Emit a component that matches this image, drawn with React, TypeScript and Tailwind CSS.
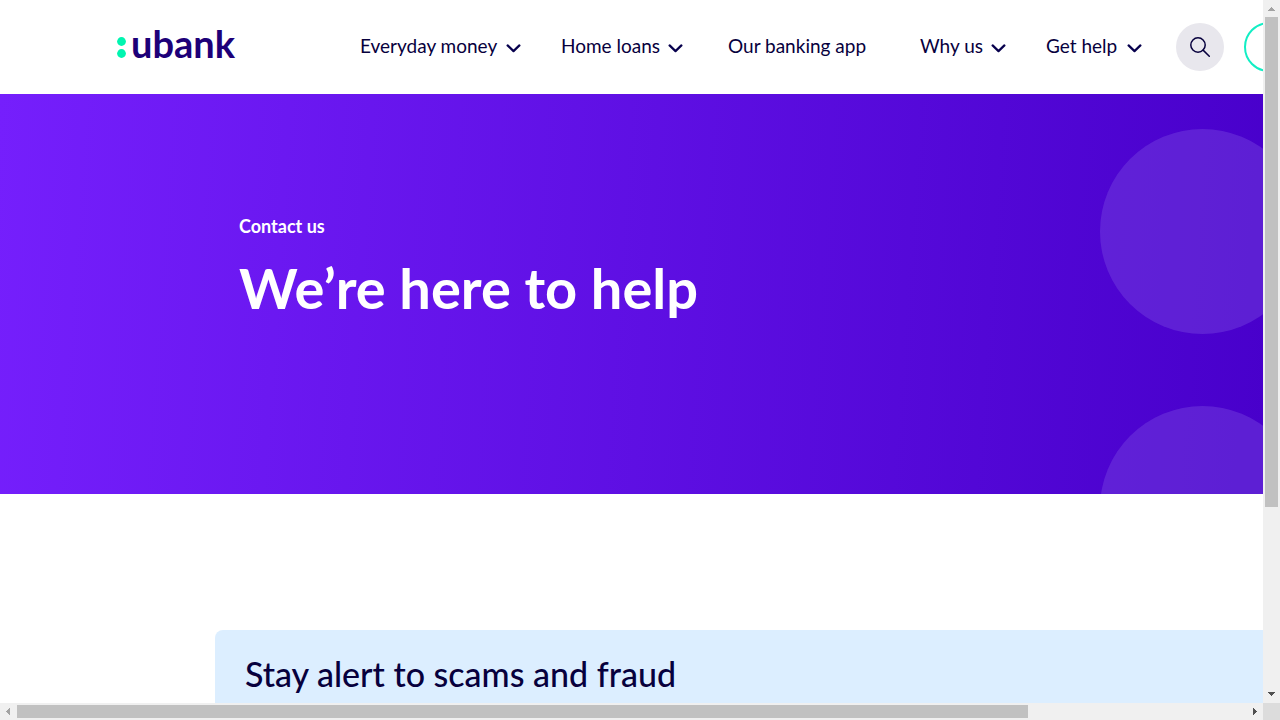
import type { ReactNode } from "react";

function Chevron() {
  return (
    <svg width="15" height="9" viewBox="0 0 15 9" fill="none" aria-hidden="true" className="mt-1 shrink-0">
      <path d="M1.6 1.4 7.5 7.1l5.9-5.7" stroke="#07004d" strokeWidth="2.2" strokeLinecap="round" strokeLinejoin="round" />
    </svg>
  );
}

function MenuButton({ width, children }: { width: string; children: ReactNode }) {
  return (
    <button type="button" className={`flex shrink-0 items-center justify-between whitespace-nowrap ${width}`}>
      {children}
      <Chevron />
    </button>
  );
}

function Logo() {
  return (
    <a href="#home" aria-label="ubank" className="flex w-[243px] shrink-0 items-center gap-1 pb-2 text-[#1d0078]">
      <svg width="10" height="30" viewBox="0 0 10 30" aria-hidden="true">
        <circle cx="4.5" cy="13.5" r="4.4" fill="#00f5b0" />
        <circle cx="4.5" cy="25.5" r="4.4" fill="#00f5b0" />
      </svg>
      <span className="text-[38px] leading-[30px] font-bold">ubank</span>
    </a>
  );
}

function Header() {
  return (
    <header className="flex h-[94px] items-center pl-[117px] text-[19px] leading-7 text-[#07003d]">
      <Logo />
      <nav aria-label="Main" className="flex shrink-0 items-center gap-10 pb-0.5">
        <MenuButton width="w-[161px]">Everyday money</MenuButton>
        <MenuButton width="w-[122px]">Home loans</MenuButton>
        <a href="#app" className="w-[157px] whitespace-nowrap pl-[5px]">Our banking app</a>
        <MenuButton width="w-[86px]">Why us</MenuButton>
        <MenuButton width="w-[96px]">Get help</MenuButton>
      </nav>
      <button type="button" aria-label="Search" className="ml-[34px] flex size-12 shrink-0 items-center justify-center rounded-full bg-[#e8e7ed]">
        <svg width="20" height="20" viewBox="0 0 20 20" fill="none" stroke="#07003d" strokeWidth="1.5" aria-hidden="true">
          <circle cx="8" cy="8" r="7.2" />
          <path d="m13.1 13.1 6.2 6.2" strokeLinecap="round" />
        </svg>
      </button>
      <button type="button" aria-label="Log in" className="ml-5 h-[50px] w-[120px] shrink-0 rounded-full border-2 border-[#12eec4]" />
    </header>
  );
}

function Hero() {
  return (
    <section className="relative h-[400px] overflow-hidden bg-[linear-gradient(94deg,#751ffc_0%,#4800cb_100%)] pl-[239px] pt-[120px] text-white">
      <div aria-hidden="true" className="absolute left-[1100px] top-[35px] flex flex-col gap-[72px]">
        <div className="size-[205px] rounded-full bg-[#7d4de0]/40" />
        <div className="size-[205px] rounded-full bg-[#7d4de0]/40" />
      </div>
      <p className="text-lg leading-6 font-bold">Contact us</p>
      <h1 className="mt-4 text-[56px] leading-[68px] font-bold">We’re here to help</h1>
    </section>
  );
}

function VerticalScrollbar() {
  return (
    <div aria-hidden="true" className="flex flex-col items-center bg-[#f0f0f0]">
      <svg width="17" height="17" viewBox="0 0 17 17" shapeRendering="crispEdges">
        <path d="M5 11h7L8.5 7z" fill="#a3a3a3" />
      </svg>
      <div className="flex w-[13px] flex-1 flex-col">
        <div className="grow-[490] bg-[#c1c1c1]" />
        <div className="grow-[179]" />
      </div>
      <svg width="17" height="17" viewBox="0 0 17 17" shapeRendering="crispEdges">
        <path d="M5 6h7L8.5 10z" fill="#505050" />
      </svg>
    </div>
  );
}

function HorizontalScrollbar() {
  return (
    <div aria-hidden="true" className="flex items-center bg-[#f0f0f0]">
      <svg width="17" height="17" viewBox="0 0 17 17" shapeRendering="crispEdges">
        <path d="M10 5v7L6 8.5z" fill="#a3a3a3" />
      </svg>
      <div className="flex h-[13px] flex-1">
        <div className="grow-[1011] bg-[#c1c1c1]" />
        <div className="grow-[218]" />
      </div>
      <svg width="17" height="17" viewBox="0 0 17 17" shapeRendering="crispEdges">
        <path d="M7 5v7l4-3.5z" fill="#505050" />
      </svg>
    </div>
  );
}

export default function App() {
  return (
    <div className="grid h-screen grid-cols-[minmax(0,1fr)_17px] grid-rows-[minmax(0,1fr)_17px] bg-white font-['Lato',sans-serif]">
      <div className="overflow-hidden">
        <Header />
        <main>
          <Hero />
          <section className="ml-[215px] mt-[136px] h-[240px] rounded-l-lg bg-[#dceeff] px-[30px] pt-6 text-[#07003d]">
            <h2 className="text-[34px] leading-10 font-medium">Stay alert to scams and fraud</h2>
          </section>
        </main>
      </div>
      <VerticalScrollbar />
      <HorizontalScrollbar />
      <div aria-hidden="true" className="bg-[#dcdcdc]" />
    </div>
  );
}
